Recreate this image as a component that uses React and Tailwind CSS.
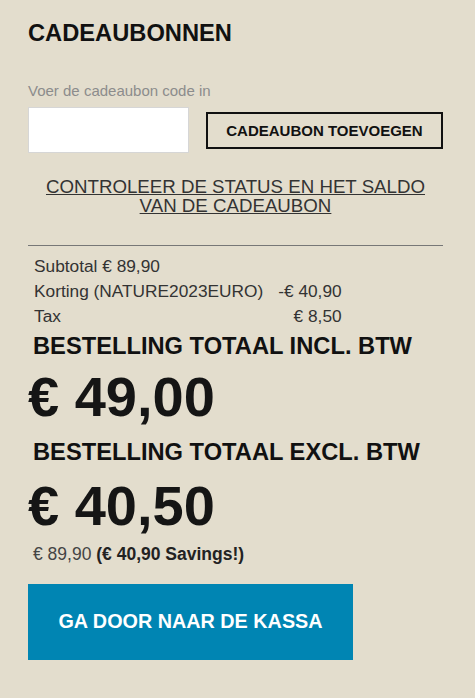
import React, { useState } from "react";

function App() {
  const [code, setCode] = useState("");

  return (
    <div className="min-h-[698px] bg-[#e3ddcd] font-['Liberation_Sans',Arial,sans-serif]">
      <div className="pl-[28px] pr-[32px] pt-[19px] pb-8">
        {/* Gift card */}
        <h2 className="text-[23.7px] leading-[28px] font-bold text-[#111]">
          CADEAUBONNEN
        </h2>

        <label className="block mt-[35px] text-[15px] leading-[18px] text-[#8c8c8c]">
          Voer de cadeaubon code in
        </label>
        <div className="mt-[7px] flex items-center gap-[17px]">
          <input
            type="text"
            value={code}
            onChange={(e) => setCode(e.target.value)}
            className="w-[161px] h-[46px] bg-white border border-[#d6d6d6] px-2 outline-none"
          />
          <button
            type="button"
            className="w-[237px] h-[37px] border-2 border-[#111] text-[15px] font-bold text-[#111] leading-none"
          >
            CADEAUBON TOEVOEGEN
          </button>
        </div>

        <a
          href="#"
          className="block mt-[25px] text-center text-[18.7px] leading-[18.5px] text-[#333] underline underline-offset-[1px]"
        >
          CONTROLEER DE STATUS EN HET SALDO
          <br />
          VAN DE CADEAUBON
        </a>

        <hr className="mt-[30px] border-0 border-t border-[#777]" />

        {/* Totals */}
        <div className="mt-[8px] pl-[6px] text-[17.3px] leading-[25px] text-[#333]">
          <div>Subtotal € 89,90</div>
          <div className="grid grid-cols-[auto_auto] justify-start gap-x-[15px]">
            <span>Korting (NATURE2023EURO)</span>
            <span className="text-right">-€ 40,90</span>
            <span>Tax</span>
            <span className="text-right">€ 8,50</span>
          </div>
        </div>

        <div className="mt-[3px] pl-[5px] text-[23.7px] leading-[28px] font-bold text-[#111]">
          BESTELLING TOTAAL INCL. BTW
        </div>
        <div className="mt-[7px] text-[56px] leading-[60px] font-bold text-[#151515]">
          € 49,00
        </div>

        <div className="mt-[11px] pl-[5px] text-[23.7px] leading-[28px] font-bold text-[#111]">
          BESTELLING TOTAAL EXCL. BTW
        </div>
        <div className="mt-[10px] text-[56px] leading-[60px] font-bold text-[#151515]">
          € 40,50
        </div>

        <div className="mt-[7px] pl-[5px] text-[17.5px] leading-[22px] text-[#444]">
          € 89,90 <span className="font-bold text-[#222]">(€ 40,90 Savings!)</span>
        </div>

        <button
          type="button"
          className="mt-[19px] w-[325px] h-[76px] bg-[#0085b3] text-white text-[19.8px] font-bold"
        >
          GA DOOR NAAR DE KASSA
        </button>
      </div>
    </div>
  );
}

export default App;
